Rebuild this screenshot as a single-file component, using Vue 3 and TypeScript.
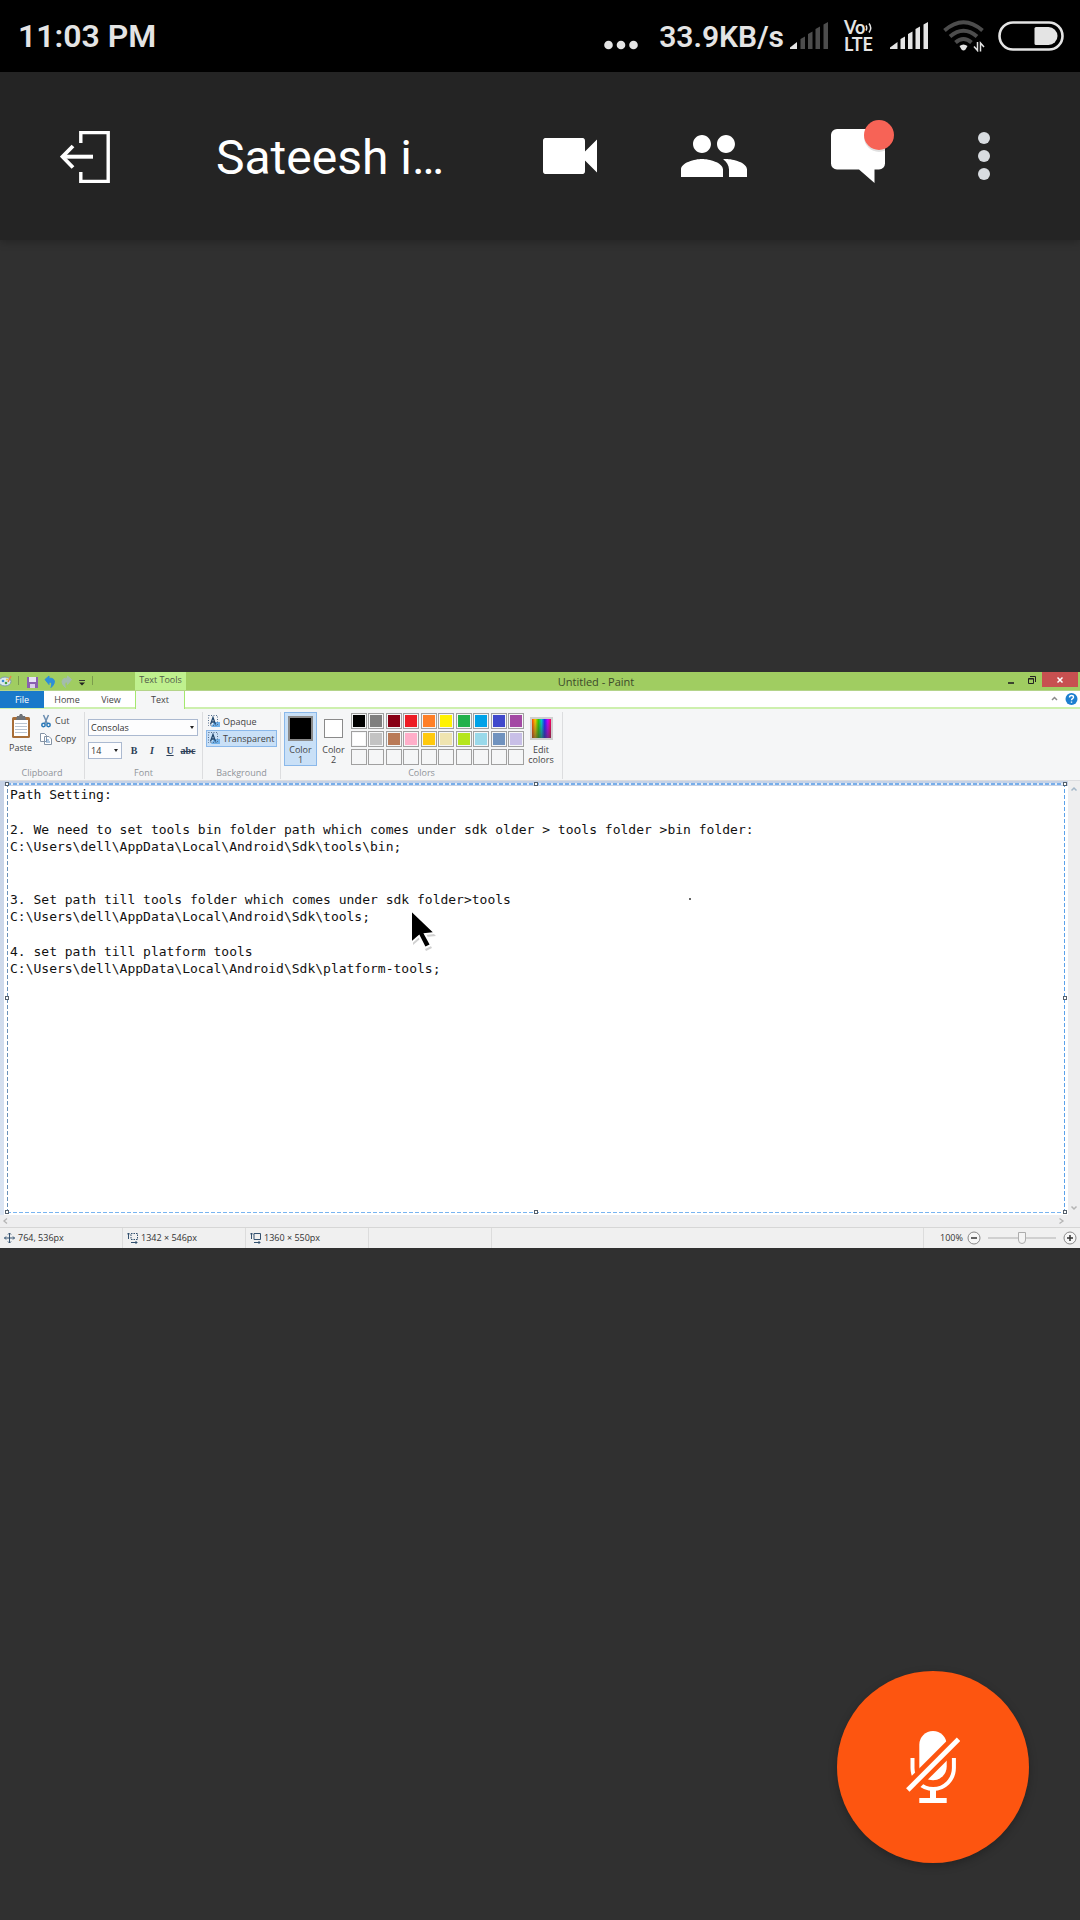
<script setup lang="ts">
import { ref } from 'vue'

const palette: string[] = [
  '#000000', '#7f7f7f', '#880015', '#ed1c24', '#ff7f27', '#fff200', '#22b14c', '#00a2e8', '#3f48cc', '#a349a4',
  '#ffffff', '#c3c3c3', '#b97a57', '#ffaec9', '#ffc90e', '#efe4b0', '#b5e61d', '#99d9ea', '#7092be', '#c8bfe7',
  '', '', '', '', '', '', '', '', '', '',
]

const notes: string[][] = [
  ['Path Setting:'],
  [
    '2. We need to set tools bin folder path which comes under sdk older > tools folder >bin folder:',
    'C:\\Users\\dell\\AppData\\Local\\Android\\Sdk\\tools\\bin;',
  ],
  [
    '3. Set path till tools folder which comes under sdk folder>tools',
    'C:\\Users\\dell\\AppData\\Local\\Android\\Sdk\\tools;',
  ],
  ['4. set path till platform tools', 'C:\\Users\\dell\\AppData\\Local\\Android\\Sdk\\platform-tools;'],
]

const handles: string[] = ['tl', 'tc', 'tr', 'ml', 'mr', 'bl', 'bc', 'br']
const zoom = ref(50)
</script>

<template>
  <div class="screen">
    <div class="status">
      <span class="clock">11:03 PM</span>
      <div class="indicators">
        <svg class="dots" width="34" height="10" viewBox="0 0 34 10" fill="#e4e4e4">
          <circle cx="4.5" cy="5" r="4.3" /><circle cx="17" cy="5" r="4.3" /><circle cx="29.5" cy="5" r="4.3" />
        </svg>
        <span class="rate">33.9KB/s</span>
        <svg class="signal" width="39" height="28" viewBox="0 0 39 28">
          <path d="M0 27V25.5L7 20v7z" fill="#e4e4e4" />
          <path d="M10.5 27V17l4.5-2.500V27zM18 27V12l4.500-2.500V27zM25.500 27V7l4.500-2.500V27zM33.500 27V2.500L38 0v27z" fill="#4c4c4c" />
        </svg>
        <span class="volte">
          <span class="vo">Vo<svg width="8" height="12" viewBox="0 0 8 12" fill="none" stroke="#e4e4e4" stroke-width="1.500"><path d="M1 3.500q1.500 2.500 0 5M4 1.500q3.500 4.500 0 9" /></svg></span>
          <span>LTE</span>
        </span>
        <svg class="signal second" width="39" height="28" viewBox="0 0 39 28" fill="#e4e4e4">
          <path d="M0 27V25.500L7.500 20v7zM10.500 27V17l4.500-2.500V27zM18 27V12l4.500-2.500V27zM25.500 27V7l4.500-2.500V27zM33.500 27V2.500L38 0v27z" />
        </svg>
        <svg class="wifi" width="42" height="32" viewBox="0 0 42 32" fill="none">
          <g stroke="#4c4c4c" stroke-width="4">
            <path d="M1.500 10.500Q20.500-6 39.500 10.500" />
            <path d="M7 16.500q13.500-11.500 27 0" />
            <path d="M12.500 22.500q8-7 16 0" />
          </g>
          <path d="M16.500 26q4-3 8 0l-2 3.500q-2 2-4 0z" fill="#e4e4e4" />
          <path d="M34.500 22v8.500l-3.500-4M37.500 31.500V23l3.500 4" stroke="#e4e4e4" stroke-width="1.500" />
        </svg>
        <svg class="battery" width="66" height="30" viewBox="0 0 66 30">
          <rect x="1.500" y="1.500" width="63" height="27" rx="13.500" fill="none" stroke="#e4e4e4" stroke-width="2.600" />
          <path d="M38 6h12.500a8.700 8.700 0 0 1 0 18H38a1.500 1.500 0 0 1-1.500-1.500v-15A1.500 1.500 0 0 1 38 6z" fill="#e4e4e4" />
        </svg>
      </div>
    </div>

    <header class="appbar">
      <button class="exit" aria-label="Leave session">
        <svg width="50" height="52" viewBox="0 0 50 52" fill="none" stroke="#fff">
          <path d="M20.800 12V1.600h27.400v48.800H20.800V41" stroke-width="3.400" />
          <path d="M33 25.700H3" stroke-width="4" /><path d="M13 15L2.500 25.700 13 36.500" stroke-width="3.800" />
        </svg>
      </button>
      <h1>Sateesh i…</h1>
      <button class="action" aria-label="Video">
        <svg width="72" height="72" viewBox="0 0 24 24" fill="#fff"><path d="M17 10.500V7c0-.55-.2-1-.8-1H3.800c-.6 0-.8.45-.8 1v10c0 .55.2 1 .8 1h12.400c.6 0 .8-.45.8-1v-3.500l4 4v-11l-4 4z" /></svg>
      </button>
      <button class="action" aria-label="Participants">
        <svg width="72" height="72" viewBox="0 0 24 24" fill="#fff"><path d="M16 11c1.660 0 2.990-1.340 2.990-3S17.660 5 16 5c-1.660 0-3 1.340-3 3s1.340 3 3 3zm-8 0c1.660 0 2.990-1.340 2.990-3S9.660 5 8 5C6.340 5 5 6.340 5 8s1.340 3 3 3zm0 2c-2.330 0-7 1.170-7 3.500V19h14v-2.500c0-2.330-4.670-3.500-7-3.500zm8 0c-.29 0-.62.02-.97.05 1.160.84 1.970 1.970 1.970 3.450V19h6v-2.500c0-2.330-4.670-3.500-7-3.500z" /></svg>
      </button>
      <button class="action" aria-label="Chat, new messages">
        <svg width="72" height="72" viewBox="0 0 72 72">
          <path d="M15 9h42a6 6 0 0 1 6 6v28.500a6 6 0 0 1-6 6h-4.500V63L37 49.500H15a6 6 0 0 1-6-6V15a6 6 0 0 1 6-6z" fill="#fff" />
          <circle cx="57" cy="17" r="15" fill="#000" opacity=".12" />
          <circle cx="57" cy="15" r="15" fill="#f76356" />
        </svg>
      </button>
      <button class="action more" aria-label="More options">
        <svg width="72" height="72" viewBox="0 0 24 24" fill="#d8dce0"><circle cx="12" cy="6" r="2" /><circle cx="12" cy="12" r="2" /><circle cx="12" cy="18" r="2" /></svg>
      </button>
    </header>

    <main class="stage">
      <section class="paint" aria-label="Shared screen">
        <div class="titlebar">
          <div class="quick">
            <svg width="94" height="18" viewBox="0 0 94 18">
              <ellipse cx="5" cy="9.500" rx="6" ry="4.500" fill="#dbe9ef" stroke="#7d9aa8" /><circle cx="3" cy="9" r="1.300" fill="#3d8bd0" /><circle cx="6" cy="11" r="1.300" fill="#45a23c" /><circle cx="7" cy="7.500" r="1" fill="#e8c838" /><path d="M8 10l3-6" stroke="#e08a4c" stroke-width="1.500" />
              <path d="M18.500 4v9M92.500 4v9" stroke="#7b9c4c" />
              <path d="M27 5h11v11H27z" fill="#8a5fb0" /><path d="M29 5h7v5h-7z" fill="#e8e4f4" /><path d="M30 12h5v4h-5z" fill="#d9cdea" />
              <path d="M45 7.500l4-3.500v2.300c6-1 7.500 4.500 2 9.200 1.500-4 .5-5.500-2-5.200v2.200z" fill="#2d8fd8" stroke="#2d8fd8" stroke-linejoin="round" />
              <path d="M71.500 7.500l-4-3.500v2.300c-6-1-7.500 4.500-2 9.200-1.500-4-.5-5.500 2-5.200v2.200z" fill="#a3bcae" stroke="#a3bcae" stroke-linejoin="round" />
              <path d="M79 8.500h6" stroke="#333" /><path d="M79 10.500h6l-3 3z" fill="#222" />
            </svg>
          </div>
          <span class="context">Text Tools</span>
          <span class="doc">Untitled - Paint</span>
          <div class="window-buttons">
            <button aria-label="Minimize"><svg width="8" height="10" viewBox="0 0 8 10"><path d="M1 8h6" stroke="#222" stroke-width="1.600" /></svg></button>
            <button aria-label="Restore"><svg width="10" height="10" viewBox="0 0 10 10" fill="none" stroke="#222"><path d="M1.500 3.500h5v5h-5zM3 1.500h5.500V7M1.500 4h5" /></svg></button>
            <button class="close" aria-label="Close"><svg width="8" height="8" viewBox="0 0 8 8"><path d="M1.500 1.500l5 5m0-5l-5 5" stroke="#fff" stroke-width="1.500" /></svg></button>
          </div>
        </div>

        <nav class="tabs">
          <button class="file">File</button>
          <button class="home">Home</button>
          <button class="view">View</button>
          <button class="text">Text</button>
          <div class="help">
            <svg width="30" height="15" viewBox="0 0 30 15"><path d="M2 9l2.500-2.500L7 9" fill="none" stroke="#8b8b8b" stroke-width="1.500" /><circle cx="21.500" cy="8" r="6" fill="#1d7fd0" /><path d="M19.500 6.500q0-2 2-2t2 1.700q0 .8-1 1.400t-1 1.600m0 1.300v1.300" fill="none" stroke="#fff" stroke-width="1.400" /></svg>
          </div>
        </nav>

        <div class="ribbon">
          <div class="group clipboard">
            <div class="tools">
              <button class="paste">
                <svg width="20" height="25" viewBox="0 0 20 25"><rect x="1" y="3" width="18" height="21" rx="1.500" fill="#a86e38" /><path d="M3 6h14v16H3z" fill="#fff" /><path d="M4 9.500h12M4 12.500h12M4 15.500h12M4 18.500h12" stroke="#b9c4d0" /><path d="M6 2h2l1-2h2l1 2h2l1 4H5z" fill="#6f7377" /></svg>
                Paste
              </button>
              <div class="stack">
                <button>
                  <svg width="14" height="14" viewBox="0 0 14 14" fill="none"><path d="M4.500 1l4 9M9.500 1l-4 9" stroke="#6b8db0" stroke-width="1.500" /><circle cx="4.500" cy="11" r="1.700" stroke="#2878b8" stroke-width="1.500" /><circle cx="9.500" cy="11" r="1.700" stroke="#2878b8" stroke-width="1.500" /></svg>
                  Cut
                </button>
                <button>
                  <svg width="14" height="14" viewBox="0 0 14 14" fill="#fff" stroke="#8493a5"><path d="M1.500 1.500h4l2 2v6h-6zM5.500 4.500h4.500l2.500 2.500v5.500h-7z" /><path d="M7 8h3m-3 2h4" stroke="#5b8cc0" /></svg>
                  Copy
                </button>
              </div>
            </div>
            <span class="label">Clipboard</span>
          </div>

          <div class="group font">
            <div class="tools">
              <span class="combo">
                <select aria-label="Font family"><option>Consolas</option></select>
                <i></i>
              </span>
              <div class="style-row">
                <span class="combo small">
                  <select aria-label="Font size"><option>14</option></select>
                  <i></i>
                </span>
                <button class="b">B</button><button class="i">I</button><button class="u">U</button><button class="s">abc</button>
              </div>
            </div>
            <span class="label">Font</span>
          </div>

          <div class="group background">
            <div class="tools">
              <button v-for="mode in ['Opaque', 'Transparent']" :key="mode" :class="{ picked: mode === 'Transparent' }">
                <svg width="14" height="13" viewBox="0 0 14 13"><path d="M7 7h6v5H4z" fill="#6fb1ea" /><rect x="1.500" y=".5" width="9" height="10" fill="none" stroke="#566f8c" stroke-dasharray="1 1.500" /><path d="M3.500 9.500L6 2.500l2.500 7M4.500 7h3" fill="none" stroke="#24486e" stroke-width="1.300" /></svg>
                {{ mode }}
              </button>
            </div>
            <span class="label">Background</span>
          </div>

          <div class="group colors">
            <div class="tools">
              <button class="color picked"><span class="swatch one"></span>Color<br />1</button>
              <button class="color"><span class="swatch two"></span>Color<br />2</button>
              <div class="palette">
                <button v-for="(color, n) in palette" :key="n" :aria-label="'Palette ' + (n + 1)" :style="{ background: color || '#f5f6f7' }"></button>
              </div>
              <button class="color edit"><span class="swatch rainbow"></span>Edit<br />colors</button>
            </div>
            <span class="label">Colors</span>
          </div>
        </div>

        <div class="work">
          <div class="sheet">
            <div class="selection"><b v-for="h in handles" :key="h" :class="h"></b></div>
            <div class="notes" role="textbox" aria-label="Text on canvas">
              <div v-for="(block, n) in notes" :key="n" class="block">
                <p v-for="line in block" :key="line">{{ line }}</p>
              </div>
            </div>
            <span class="speck"></span>
            <svg class="pointer" width="34" height="48" viewBox="0 0 34 48">
              <path d="M5 6v31l7-6 6 12 6-3-6-11 10-1z" fill="#777" opacity=".35" />
              <path d="M3 2v33l8-7 6 12 6-3-6-11 10-1z" fill="#000" stroke="#fff" stroke-width="2" />
            </svg>
          </div>
          <div class="vscroll">
            <svg width="8" height="8" viewBox="0 0 8 8" fill="none" stroke="#a3b7c9" stroke-width="1.500"><path d="M1.500 5.500L4 3l2.500 2.500" /></svg>
            <svg width="8" height="8" viewBox="0 0 8 8" fill="none" stroke="#b4b4b4" stroke-width="1.500"><path d="M1.500 2.500L4 5l2.500-2.500" /></svg>
          </div>
        </div>
        <div class="hscroll">
          <svg width="8" height="8" viewBox="0 0 8 8" fill="none" stroke="#b4b4b4" stroke-width="1.300"><path d="M5 1.500L2 4l3 2.500" /></svg>
          <svg width="8" height="8" viewBox="0 0 8 8" fill="none" stroke="#b4b4b4" stroke-width="1.300"><path d="M2.500 1.500L6 4 2.500 6.500" /></svg>
        </div>

        <footer class="info">
          <div class="cell"><svg width="11" height="12" viewBox="0 0 11 12" fill="none" stroke="#33516f"><path d="M5.500 1v10M.5 6h10M4 2.500L5.500 1 7 2.500M4 9.500L5.500 11 7 9.500M2 4.500L.5 6 2 7.500M9 4.500L10.500 6 9 7.500" /></svg>764, 536px</div>
          <div class="cell"><svg width="11" height="12" viewBox="0 0 11 12" fill="none" stroke="#33516f"><path d="M1.500 1v6M0 2.500L1.500 1 3 2.500M4 10.500h6M8.500 9l1.500 1.500L8.500 12" /><path d="M4 1.500h6.500v6H4z" stroke-dasharray="1.500 1" /></svg>1342 × 546px</div>
          <div class="cell"><svg width="11" height="12" viewBox="0 0 11 12" fill="none" stroke="#33516f"><path d="M1.500 1v6M0 2.500L1.500 1 3 2.500M4 10.500h6M8.500 9l1.500 1.500L8.500 12M4 1.500h6.500v6H4z" /></svg>1360 × 550px</div>
          <div class="cell"></div>
          <div class="zoom">
            <span>100%</span>
            <button aria-label="Zoom out"><svg width="14" height="14" viewBox="0 0 14 14" fill="#f7f7f7" stroke="#8a8a8a"><circle cx="7" cy="7" r="6" /><path d="M4 7h6" stroke="#333" stroke-width="1.500" /></svg></button>
            <input v-model.number="zoom" type="range" min="0" max="100" aria-label="Zoom" />
            <button aria-label="Zoom in"><svg width="14" height="14" viewBox="0 0 14 14" fill="#f7f7f7" stroke="#8a8a8a"><circle cx="7" cy="7" r="6" /><path d="M4 7h6M7 4v6" stroke="#333" stroke-width="1.500" /></svg></button>
          </div>
        </footer>
      </section>
    </main>

    <button class="mic" aria-label="Unmute microphone">
      <svg width="54" height="72" viewBox="0 0 54 72" fill="none">
        <rect x="13.300" y="0" width="27.400" height="49.300" rx="13.700" fill="#fff" />
        <path d="M6.500 27v10a20.700 21 0 0 0 41.400 0V27" stroke="#fff" stroke-width="4" />
        <path d="M-2 62.500L57 3.500" stroke="#fd5510" stroke-width="14" />
        <path d="M1.800 59L52.500 8.300" stroke="#fff" stroke-width="4.800" />
        <path d="M24 58h6v9h10.700v5H13.300v-5H24z" fill="#fff" />
      </svg>
    </button>
  </div>
</template>

<style>
body {
  margin: 0;
  background: #303030;
}
</style>

<style scoped>
* {
  box-sizing: border-box;
}
svg {
  display: block;
  flex: none;
}
button {
  margin: 0;
  padding: 0;
  border: 0;
  background: none;
  color: inherit;
  font: inherit;
}
.screen {
  position: relative;
  display: flex;
  flex-direction: column;
  min-height: 100vh;
  background: #303030;
  font-family: Roboto, sans-serif;
}

/* phone status bar */
.status {
  display: flex;
  justify-content: space-between;
  align-items: center;
  height: 72px;
  padding: 0 16px 0 18px;
  background: #000;
  color: #e4e4e4;
  font-weight: 600;
}
.clock {
  font-size: 32px;
}
.indicators {
  display: flex;
  align-items: center;
}
.dots {
  margin: 18px 21px 0 0;
}
.rate {
  margin-right: 6px;
  font-size: 30px;
}
.volte {
  display: flex;
  flex-direction: column;
  width: 32px;
  margin: 0 14px 0 15px;
  font: 700 18px/17px Lato, sans-serif;
}
.vo {
  display: flex;
  align-items: center;
}
.second {
  margin-right: 14px;
}
.wifi {
  margin-right: 13px;
}

/* session bar */
.appbar {
  display: flex;
  align-items: center;
  height: 168px;
  padding: 0 42px 0 60px;
  background: #242424;
  box-shadow: 0 2px 8px rgba(0, 0, 0, 0.25);
  color: #fff;
}
.exit {
  margin-right: 106px;
  padding-top: 2px;
}
h1 {
  flex: 1;
  min-width: 0;
  margin: 0;
  padding-top: 3px;
  overflow: hidden;
  font-size: 48px;
  font-weight: 400;
  line-height: 60px;
  white-space: nowrap;
}
.action {
  display: flex;
  justify-content: center;
  width: 144px;
}
.more {
  width: 108px;
}

/* shared desktop */
.stage {
  display: flex;
  flex: 1;
  flex-direction: column;
  justify-content: center;
  padding-bottom: 240px;
}
.paint {
  background: #f5f6f7;
  color: #444;
  font: 9px/10px "Open Sans", "Noto Sans", sans-serif;
}
.titlebar {
  display: flex;
  height: 19px;
  border-bottom: 1px solid #b4d48a;
  background: #a0cd61;
}
.quick {
  width: 135px;
}
.context {
  width: 51px;
  background: #bff08e;
  color: #4f5a48;
  line-height: 16px;
  text-align: center;
}
.doc {
  flex: 1;
  padding-left: 6px;
  color: #3c4a2a;
  font-size: 11px;
  line-height: 19px;
  text-align: center;
}
.window-buttons {
  display: flex;
  align-items: flex-start;
  height: 15px;
  padding-right: 2px;
}
.window-buttons button {
  display: flex;
  justify-content: center;
  align-items: center;
  width: 21px;
  height: 15px;
}
.window-buttons .close {
  width: 36px;
  background: #c75050;
}
.tabs {
  display: flex;
  height: 18px;
  border-bottom: 2px solid #cdf0ae;
  background: #fff;
}
.tabs button {
  height: 18px;
}
.tabs .file {
  width: 44px;
  height: 17px;
  background: #1979ca;
  color: #fff;
}
.home {
  width: 46px;
}
.view {
  width: 42px;
  margin-right: 3px;
}
.tabs .text {
  width: 50px;
  border: solid #a4e86e;
  border-width: 0 1px;
  background: #f5f6f7;
}
.help {
  margin-left: auto;
}
.ribbon {
  display: flex;
  height: 72px;
  padding: 3px 0 1px;
  border-bottom: 1px solid #dcdde0;
}
.group {
  display: flex;
  flex-direction: column;
  border-right: 1px solid #dcdddf;
}
.tools {
  flex: 1;
}
.label {
  height: 11px;
  color: #8f9499;
  text-align: center;
}
.stack button,
.background button {
  display: flex;
  align-items: center;
  gap: 2px;
}
.clipboard {
  width: 85px;
}
.clipboard .tools {
  display: flex;
  gap: 8px;
  padding: 2px 0 0 10px;
}
.paste {
  display: flex;
  flex-direction: column;
  align-items: center;
  gap: 4px;
  width: 21px;
  height: 40px;
}
.stack {
  display: flex;
  flex-direction: column;
  gap: 4px;
}
.font {
  width: 118px;
}
.font .tools {
  display: flex;
  flex-direction: column;
  gap: 6px;
  padding: 7px 3px 0;
}
.combo {
  position: relative;
  display: block;
  width: 110px;
  height: 17px;
}
.combo.small {
  width: 34px;
  margin-right: 3px;
}
.combo select {
  width: 100%;
  height: 17px;
  padding: 0 2px;
  border: 1px solid #abb9d0;
  border-radius: 0;
  appearance: none;
  background: #fdfdfe;
  color: #333;
  font: inherit;
}
.combo i {
  position: absolute;
  top: 7px;
  right: 4px;
  border: solid transparent;
  border-width: 3px 2px 0;
  border-top-color: #222;
}
.style-row {
  display: flex;
  align-items: center;
}
.style-row button {
  width: 18px;
  color: #2d3f58;
  font-family: "Liberation Serif", serif;
  font-size: 10px;
  font-weight: 700;
}
.style-row .i {
  font-style: italic;
}
.style-row .u {
  text-decoration: underline;
}
.style-row .s {
  text-decoration: line-through;
}
.background {
  width: 78px;
}
.background .tools {
  padding: 1px 3px 0;
}
.background button {
  width: 71px;
  height: 17px;
  border: 1px solid transparent;
}
.background .picked,
.color.picked {
  border-color: #8ab8ea;
  background: #c9e0f7;
}
.colors {
  width: 282px;
}
.colors .tools {
  display: flex;
  align-items: flex-start;
  padding: 0 4px 0 3px;
}
.color {
  width: 33px;
  height: 54px;
  border: 1px solid transparent;
}
.swatch {
  display: block;
  border: 1px solid #8a8a8a;
}
.one {
  width: 25px;
  height: 25px;
  margin: 2px 3px 4px;
  border-width: 2px;
  background: #000;
}
.two {
  width: 19px;
  height: 19px;
  margin: 5px 6px 7px;
  background: #fff;
}
.palette {
  display: grid;
  grid-template-columns: repeat(10, 16px);
  grid-auto-rows: 16px;
  flex: 1;
  justify-content: space-between;
  gap: 2px 0;
  padding: 1px 0 0 1px;
}
.palette button {
  border: 1px solid #a0a0a0;
  box-shadow: inset 0 0 0 1px #f5f6f7;
}
.color.edit {
  width: 34px;
}
.rainbow {
  width: 23px;
  height: 23px;
  margin: 3px 5px 5px;
  border: 2px solid #cfcfcf;
  background: linear-gradient(rgba(128, 128, 128, 0), rgba(64, 64, 64, 0.6)), linear-gradient(90deg, #f40, #fc0, #3c0, #0cc, #22f, #c0f, #f04);
}

/* canvas */
.work {
  display: flex;
  background: linear-gradient(#c6d2e6, #dbe5f3);
}
.sheet {
  position: relative;
  flex: 1;
  min-height: 429px;
  margin: 5px 0 0 4px;
  background: #fff;
}
.selection {
  position: absolute;
  inset: -3px 3px 2px;
  background:
    repeating-linear-gradient(90deg, #78aeea 0 4px, #e4edf8 4px 6px) top / 100% 2px no-repeat,
    repeating-linear-gradient(90deg, #78b4f0 0 4px, #fff 4px 6px) bottom / 100% 1px no-repeat,
    repeating-linear-gradient(#6a90b8 0 4px, #fff 4px 6px) left / 1px 100% no-repeat,
    repeating-linear-gradient(#5ba2ea 0 4px, #fff 4px 6px) right / 1px 100% no-repeat;
}
.selection b {
  position: absolute;
  width: 4px;
  height: 4px;
  border: 1px solid #55606c;
  background: #fff;
}
.tl, .tc, .tr { top: -1px; }
.ml, .mr { top: calc(50% - 2px); }
.bl, .bc, .br { bottom: -1px; }
.tl, .ml, .bl { left: -2px; }
.tc, .bc { left: calc(50% - 2px); }
.tr, .mr, .br { right: -2px; }
.notes {
  position: relative;
  display: flex;
  flex-direction: column;
  gap: 18px;
  padding-left: 6px;
  color: #111;
  font: 13px/17px "DejaVu Sans Mono", monospace;
}
.notes p {
  margin: 0;
  white-space: pre;
}
.block:nth-child(3) {
  margin-top: 18px;
}
.speck {
  position: absolute;
  top: 112px;
  left: 685px;
  width: 2px;
  height: 2px;
  background: #666;
}
.pointer {
  position: absolute;
  top: 122px;
  left: 404px;
}
.vscroll {
  display: flex;
  flex-direction: column;
  justify-content: space-between;
  align-items: center;
  width: 12px;
  padding: 4px 0 3px;
  background: #eeeeef;
}
.hscroll {
  display: flex;
  justify-content: space-between;
  align-items: center;
  height: 12px;
  padding: 0 15px 0 2px;
  background: #eeeeef;
}
.info {
  display: flex;
  height: 21px;
  border-top: 1px solid #d6d6d6;
  background: #f0f0f0;
  color: #333;
}
.cell {
  display: flex;
  align-items: center;
  gap: 3px;
  width: 123px;
  padding-left: 4px;
  border-right: 1px solid #dcdcdc;
}
.zoom {
  display: flex;
  align-items: center;
  margin-left: auto;
  padding: 0 3px 0 16px;
  border-left: 1px solid #dcdcdc;
}
.zoom span {
  width: 27px;
}
.zoom input {
  width: 68px;
  height: 14px;
  margin: 0 7px;
  appearance: none;
  background: linear-gradient(#d0d0d0, #d0d0d0) center / 100% 2px no-repeat;
}
.zoom input::-webkit-slider-thumb {
  width: 8px;
  height: 12px;
  border: 1px solid #adadad;
  border-radius: 0 0 4px 4px;
  appearance: none;
  background: #f4f4f4;
}

.mic {
  position: absolute;
  right: 51px;
  bottom: 57px;
  display: flex;
  justify-content: center;
  align-items: center;
  width: 192px;
  height: 192px;
  border-radius: 50%;
  background: #fd5510;
  box-shadow: 0 3px 8px rgba(0, 0, 0, 0.25);
}
</style>
